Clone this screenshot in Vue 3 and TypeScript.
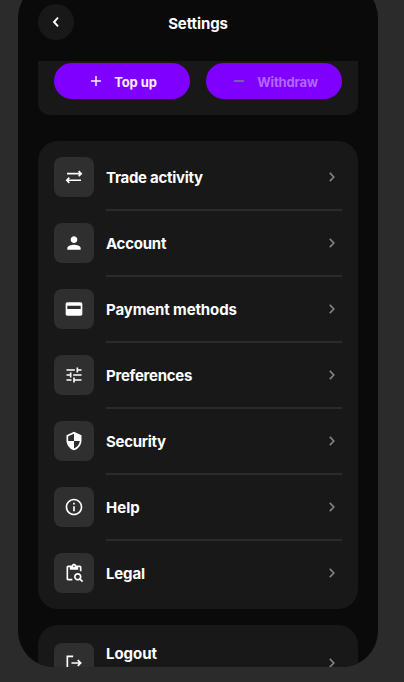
<script setup lang="ts">
interface MenuItem {
  label: string
  icon: string
  tracking: number
}

const items: MenuItem[] = [
  {
    label: 'Trade activity',
    tracking: -0.28,
    icon: 'M3.6 8h16.4M17.6 4.9l3.1 3.1-3.1 3.1M20.4 15.9H4M6.4 12.8l-3.1 3.1 3.1 3.1',
  },
  {
    label: 'Account',
    tracking: -0.25,
    icon: 'M12 12c2.2 0 4-1.8 4-4s-1.8-4-4-4-4 1.8-4 4 1.8 4 4 4zm0 2c-2.7 0-8 1.3-8 4v2h16v-2c0-2.7-5.3-4-8-4z',
  },
  {
    label: 'Payment methods',
    tracking: -0.12,
    icon: 'M20 4H4c-1.1 0-2 .9-2 2v12c0 1.1.9 2 2 2h16c1.1 0 2-.9 2-2V6c0-1.1-.9-2-2-2zM20 12H4V8h16z',
  },
  {
    label: 'Preferences',
    tracking: -0.28,
    icon: 'M3 17v2h6v-2H3zM3 5v2h10V5H3zm10 16v-2h8v-2h-8v-2h-2v6h2zM7 9v2H3v2h4v2h2V9H7zm14 4v-2H11v2h10zm-6-4h2V7h4V5h-4V3h-2v6z',
  },
  {
    label: 'Security',
    tracking: -0.3,
    icon: 'M12 1 3 5v6c0 5.55 3.84 10.74 9 12 5.16-1.26 9-6.45 9-12V5l-9-4zm0 10.99h7c-.53 4.12-3.28 7.79-7 8.94V12H5V6.3l7-3.11v8.8z',
  },
  {
    label: 'Help',
    tracking: 0,
    icon: 'M11 7h2v2h-2zm0 4h2v6h-2zm1-9C6.48 2 2 6.48 2 12s4.48 10 10 10 10-4.48 10-10S17.52 2 12 2zm0 18c-4.41 0-8-3.59-8-8s3.59-8 8-8 8 3.59 8 8-3.59 8-8 8z',
  },
  {
    label: 'Legal',
    tracking: -0.15,
    icon: 'M5 5h2v3h10V5h2v5h2V5c0-1.1-.9-2-2-2h-4.18C14.4 1.84 13.3 1 12 1s-2.4.84-2.82 2H5c-1.1 0-2 .9-2 2v14c0 1.1.9 2 2 2h5v-2H5V5zm7-2c.55 0 1 .45 1 1s-.45 1-1 1-1-.45-1-1 .45-1 1-1zM20.3 18.9c.4-.7.7-1.5.7-2.4 0-2.5-2-4.5-4.5-4.5S12 14 12 16.5s2 4.5 4.5 4.5c.9 0 1.7-.3 2.4-.7l2.7 2.7 1.4-1.4-2.7-2.7zm-3.8.1c-1.4 0-2.5-1.1-2.5-2.5s1.1-2.5 2.5-2.5 2.5 1.1 2.5 2.5-1.1 2.5-2.5 2.5z',
  },
]
</script>

<template>
  <div class="stage">
    <main class="phone">
      <header class="header">
        <button class="back" aria-label="Back">
          <svg viewBox="0 0 20 20"><path d="M12 5.7 8 10l4 4.3" /></svg>
        </button>
        <h1>Settings</h1>
      </header>
      <div class="scroll">
        <section class="actions">
          <button class="pill">
            <svg viewBox="0 0 12 12"><path d="M1 6h10M6 1v10" /></svg>
            <span>Top up</span>
          </button>
          <button class="pill" disabled>
            <svg viewBox="0 0 12 12"><path d="M1 6h10" /></svg>
            <span class="withdraw">Withdraw</span>
          </button>
        </section>
        <section class="card">
          <div v-for="(item, i) in items" :key="item.label" class="row">
            <span class="tile">
              <svg viewBox="0 0 24 24" :class="{ line: i === 0 }"><path :d="item.icon" fill-rule="evenodd" /></svg>
            </span>
            <span class="label" :style="{ letterSpacing: item.tracking + 'px' }">{{ item.label }}</span>
            <svg class="chevron" viewBox="0 0 10 12"><path d="m2.8 1.9 4 4.1-4 4.1" /></svg>
          </div>
        </section>
        <section class="card logout">
          <span class="tile">
            <svg viewBox="0 0 24 24" class="line"><path d="M11 4H4v16h7M9 12h11M16.5 8.5l3.5 3.5-3.5 3.5" /></svg>
          </span>
          <span class="label logout-label">Logout</span>
          <svg class="chevron" viewBox="0 0 10 12"><path d="m2.8 1.9 4 4.1-4 4.1" /></svg>
        </section>
      </div>
    </main>
  </div>
</template>

<style>
body {
  background: #2b2b2b;
}
</style>

<style scoped>
.stage {
  height: 682px;
  display: flex;
  align-items: flex-end;
  padding: 0 26px 15px 18px;
  box-sizing: border-box;
  overflow: hidden;
  font-family: Inter, "Liberation Sans", sans-serif;
}
.phone {
  width: 360px;
  height: 685px;
  flex: none;
  box-sizing: border-box;
  padding: 22px 20px 0;
  border-radius: 36px;
  background: #0a0a0a;
  color: #fff;
  overflow: hidden;
  display: flex;
  flex-direction: column;
}
button {
  border: 0;
  padding: 0;
  font: inherit;
  color: inherit;
}
svg {
  display: block;
  flex: none;
}
.header {
  flex: none;
  height: 57px;
  display: grid;
  grid-template-columns: 36px 1fr 36px;
  align-items: start;
}
.back {
  width: 36px;
  height: 36px;
  border-radius: 50%;
  background: #181818;
  display: grid;
  place-items: center;
}
.back svg {
  width: 20px;
  height: 20px;
  fill: none;
  stroke: #fff;
  stroke-width: 1.9;
}
h1 {
  margin: 0;
  font-size: 15px;
  line-height: 40px;
  font-weight: 650;
  text-align: center;
  letter-spacing: -0.1px;
}
.scroll {
  flex: 1;
  min-height: 0;
  overflow: hidden;
}
.actions {
  height: 54px;
  padding: 2px 16px 16px;
  box-sizing: border-box;
  display: flex;
  gap: 16px;
  background: #181818;
  border-radius: 0 0 12px 12px;
}
.pill {
  flex: 1;
  height: 36px;
  border-radius: 18px;
  background: #7f00ff;
  display: flex;
  align-items: center;
  justify-content: center;
  gap: 12px;
  padding-left: 3px;
  font-size: 13px;
  font-weight: 650;
  letter-spacing: -0.1px;
  color: #f7efff;
}
.pill span {
  padding-top: 2px;
}
.pill svg {
  width: 12px;
  height: 12px;
  fill: none;
  stroke: currentColor;
  stroke-width: 1.5;
}
.pill:disabled {
  color: #b266ff;
}
.pill:disabled svg {
  stroke: #7f5aa5;
  stroke-width: 2;
}
.pill .withdraw {
  letter-spacing: -0.15px;
}
.card {
  margin-top: 26px;
  padding: 3px 16px 3px;
  border-radius: 20px;
  background: #181818;
}
.row {
  position: relative;
  height: 66px;
  display: grid;
  grid-template-columns: 40px 1fr 20px;
  column-gap: 12px;
  align-items: center;
}
.row:not(:last-child)::after {
  content: "";
  position: absolute;
  left: 52px;
  right: 0;
  bottom: -1px;
  height: 2px;
  background: #2b2b2b;
}
.tile {
  width: 40px;
  height: 40px;
  border-radius: 8px;
  background: #2f2f2f;
  display: grid;
  place-items: center;
}
.tile svg {
  width: 20px;
  height: 20px;
  fill: #fff;
}
.tile svg.line {
  fill: none;
  stroke: #fff;
  stroke-width: 2;
}
.label {
  font-size: 15px;
  line-height: 20px;
  font-weight: 650;
  white-space: nowrap;
  padding-top: 1px;
}
.chevron {
  width: 10px;
  height: 12px;
  justify-self: center;
  fill: none;
  stroke: #858585;
  stroke-width: 1.6;
}
.logout {
  margin-top: 16px;
  height: 76px;
  box-sizing: border-box;
  padding: 18px 16px;
  display: grid;
  grid-template-columns: 40px 1fr 20px;
  column-gap: 12px;
  align-items: center;
}
.logout-label {
  align-self: start;
  letter-spacing: -0.05px;
}
</style>
